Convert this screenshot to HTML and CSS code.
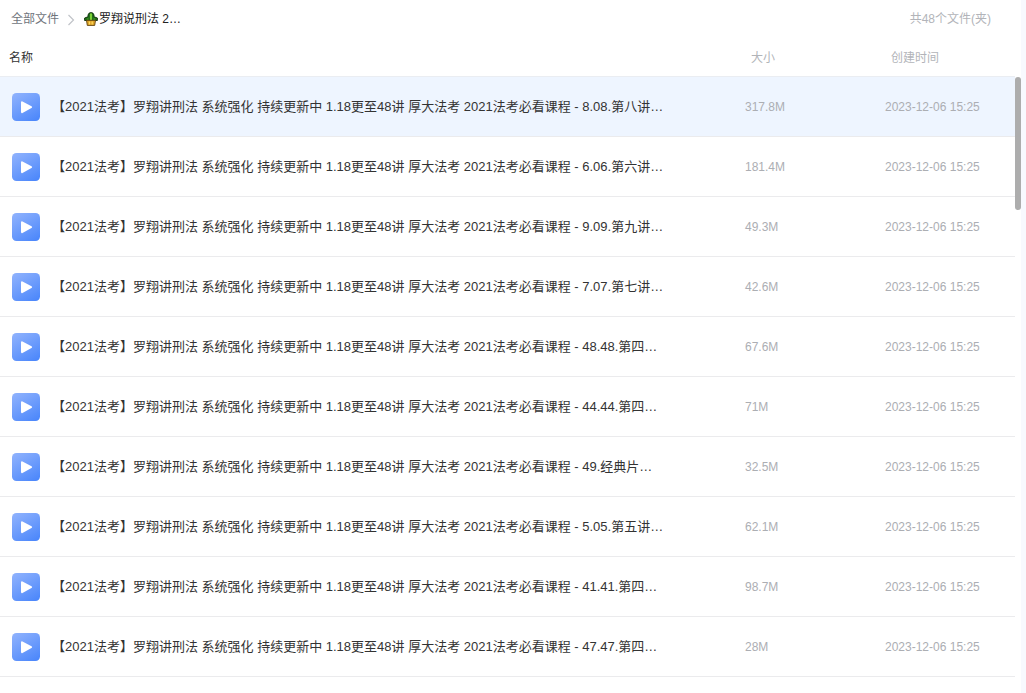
FILE: index.html
```html
<!DOCTYPE html>
<html lang="zh-CN">
<head>
<meta charset="utf-8">
<title>全部文件</title>
<link rel="stylesheet" href="styles.css">
</head>
<body>
<svg class="defs" aria-hidden="true">
  <defs>
    <linearGradient id="tile" x1=".2" y1="0" x2=".8" y2="1"><stop offset="0" stop-color="#8cb0fd"/><stop offset="1" stop-color="#4d88fb"/></linearGradient>
    <symbol id="video" viewBox="0 0 28 28"><rect width="28" height="28" rx="4.5" fill="url(#tile)"/><path d="M10 9.3 19 14.2 10 19.1Z" fill="#fff" stroke="#fff" stroke-width="2" stroke-linejoin="round"/></symbol>
  </defs>
</svg>
<main class="panel">
  <header class="topbar">
    <nav class="crumbs">
      <a class="crumb" href="#">全部文件</a>
      <svg class="chevron" viewBox="0 0 8 12"><path d="M1.5 1 6.5 6 1.5 11" fill="none" stroke="#c0c3c8" stroke-width="1.2"/></svg>
      <span class="current"><svg class="cactus" viewBox="0 0 14 14"><path d="M.6 8.5V6L4 4.800V3Q4.500.6 7 .6T10 3v1.800L13.400 6v2.500Z" fill="#23701a" stroke="#0c2e08" stroke-width=".9"/><path d="M7 1.500v6.500" stroke="#8be33c" stroke-width="1.700"/><path d="M3 7h1.500M9.500 7H11" stroke="#4fae2a"/><path d="M2.500 8.300h9l-.8 5.100H3.300Z" fill="#e0a52a" stroke="#5c400c" stroke-width=".9"/><path d="M5.500 9.500v3M8.200 9.500v3" stroke="#ffdc62" stroke-width="1.200"/></svg>罗翔说刑法 2…</span>
    </nav>
    <span class="count">共48个文件(夹)</span>
  </header>
  <div class="list">
    <table class="files">
      <colgroup><col><col class="col-size"><col class="col-time"></colgroup>
      <thead><tr><th class="head-name">名称</th><th>大小</th><th>创建时间</th></tr></thead>
      <tbody id="rows"></tbody>
    </table>
    <div class="thumb"></div>
  </div>
</main>
<script src="files.js"></script>
</body>
</html>
```

FILE: styles.css
```css
* { box-sizing: border-box; }
body {
  margin: 0;
  min-height: 100vh;
  background: #f8f9fe;
  font: 12px/18px "Liberation Sans", "Noto Sans CJK SC", sans-serif;
  color: #222;
}
.defs { position: absolute; width: 0; height: 0; }
.panel { min-height: 100vh; margin-right: 5px; background: #fff; }
.topbar {
  display: flex;
  align-items: center;
  justify-content: space-between;
  height: 38px;
  padding: 0 30px 0 11px;
}
.crumbs { display: flex; align-items: center; }
.crumb { color: #70747c; text-decoration: none; }
.chevron { width: 8px; height: 12px; margin: 2px 9px 0 8px; }
.current { display: flex; align-items: center; color: #222; }
.cactus { width: 14px; height: 14px; margin-right: 1px; }
.count { color: #b2b4b9; }
.list { position: relative; padding-right: 6px; }
.files {
  width: 100%;
  table-layout: fixed;
  border-collapse: separate;
  border-spacing: 0;
}
.col-size { width: 140px; }
.col-time { width: 136px; }
th {
  height: 39px;
  padding: 1px 0 0 12px;
  border-bottom: 1px solid #eaedf2;
  font-weight: 400;
  text-align: left;
  color: #b2b4b9;
}
.head-name { padding-left: 9px; color: #333; }
td {
  height: 60px;
  padding: 0 0 0 6px;
  border-bottom: 1px solid #ebebed;
  color: #acaeb3;
}
.name { padding: 0 70px 0 12px; color: #333; }
.selected td { background: #eef5ff; }
.file { display: flex; align-items: center; gap: 12px; }
.icon { flex: none; width: 28px; height: 28px; }
.title {
  overflow: hidden;
  font-size: 13px;
  white-space: nowrap;
}
.thumb {
  position: absolute;
  top: 39px;
  right: 0;
  width: 6px;
  height: 133px;
  border-radius: 3px;
  background: #adadad;
}
```

FILE: files.js
```js
const prefix = "【2021法考】罗翔讲刑法 系统强化 持续更新中 1.18更至48讲 厚大法考 2021法考必看课程 - ";
const files = [
  ["8.08.第八讲…", "317.8M"],
  ["6.06.第六讲…", "181.4M"],
  ["9.09.第九讲…", "49.3M"],
  ["7.07.第七讲…", "42.6M"],
  ["48.48.第四…", "67.6M"],
  ["44.44.第四…", "71M"],
  ["49.经典片…", "32.5M"],
  ["5.05.第五讲…", "62.1M"],
  ["41.41.第四…", "98.7M"],
  ["47.47.第四…", "28M"]
];
document.getElementById("rows").innerHTML = files.map(([name, size], i) => `
  <tr class="${i === 0 ? "selected" : ""}">
    <td class="name"><div class="file"><svg class="icon"><use href="#video"/></svg><span class="title">${prefix}${name}</span></div></td>
    <td>${size}</td>
    <td>2023-12-06 15:25</td>
  </tr>`).join("");
```
